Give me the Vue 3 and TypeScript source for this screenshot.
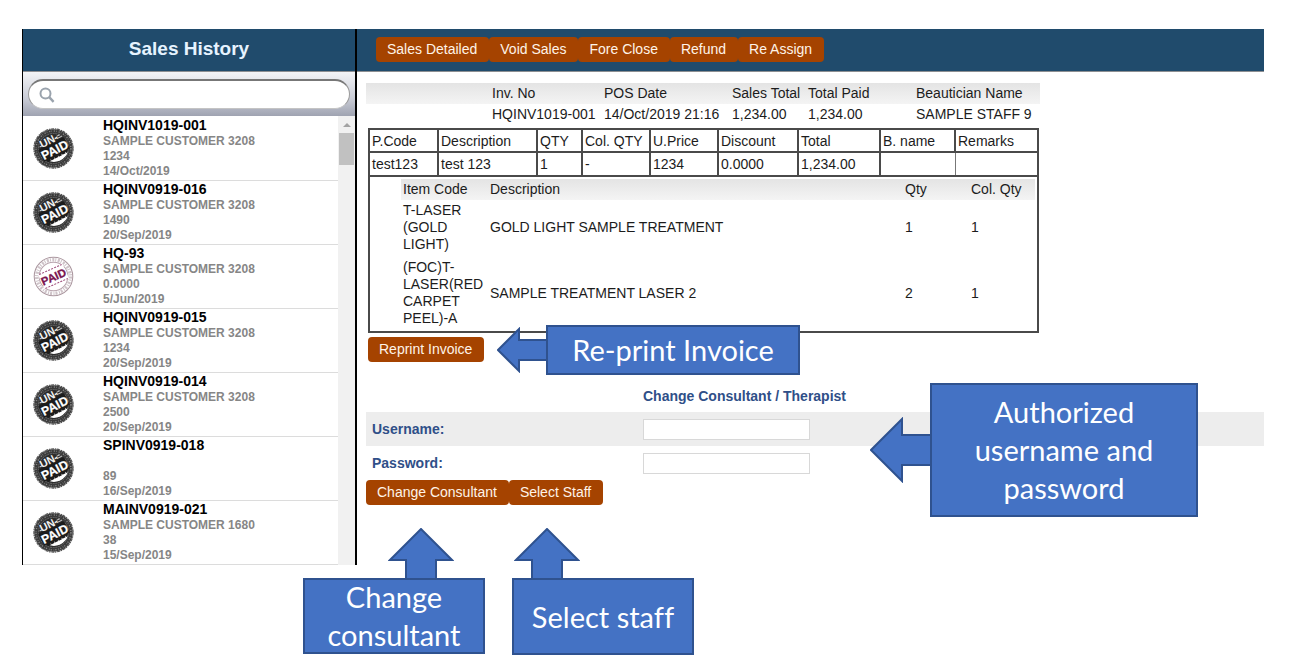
<script setup lang="ts">
interface Sale {
  invoice: string
  customer: string
  amount: string
  date: string
  paid: boolean
}

interface TreatmentItem {
  code: string
  description: string
  qty: number
  collected: number
}

const sales: Sale[] = [
  { invoice: 'HQINV1019-001', customer: 'SAMPLE CUSTOMER 3208', amount: '1234', date: '14/Oct/2019', paid: false },
  { invoice: 'HQINV0919-016', customer: 'SAMPLE CUSTOMER 3208', amount: '1490', date: '20/Sep/2019', paid: false },
  { invoice: 'HQ-93', customer: 'SAMPLE CUSTOMER 3208', amount: '0.0000', date: '5/Jun/2019', paid: true },
  { invoice: 'HQINV0919-015', customer: 'SAMPLE CUSTOMER 3208', amount: '1234', date: '20/Sep/2019', paid: false },
  { invoice: 'HQINV0919-014', customer: 'SAMPLE CUSTOMER 3208', amount: '2500', date: '20/Sep/2019', paid: false },
  { invoice: 'SPINV0919-018', customer: '', amount: '89', date: '16/Sep/2019', paid: false },
  { invoice: 'MAINV0919-021', customer: 'SAMPLE CUSTOMER 1680', amount: '38', date: '15/Sep/2019', paid: false },
]

const actions: string[] = ['Sales Detailed', 'Void Sales', 'Fore Close', 'Refund', 'Re Assign']

const lineHeads: string[] = ['P.Code', 'Description', 'QTY', 'Col. QTY', 'U.Price', 'Discount', 'Total', 'B. name', 'Remarks']
const lineCells: string[] = ['test123', 'test 123', '1', '-', '1234', '0.0000', '1,234.00', '', '']

const items: TreatmentItem[] = [
  { code: 'T-LASER (GOLD LIGHT)', description: 'GOLD LIGHT SAMPLE TREATMENT', qty: 1, collected: 1 },
  { code: '(FOC)T-LASER(RED CARPET PEEL)-A', description: 'SAMPLE TREATMENT LASER 2', qty: 2, collected: 1 },
]
</script>

<template>
  <div class="page">
    <div class="shell">
      <aside class="sidebar">
        <header class="bar side-bar"><h1>Sales History</h1></header>
        <div class="search">
          <label class="pill">
            <svg class="lens" viewBox="0 0 16 16" aria-hidden="true">
              <circle cx="6.5" cy="6.5" r="5" fill="none" stroke="#9aa3ad" stroke-width="2" />
              <path d="M10.2 10.2 L14.6 14.8" stroke="#9aa3ad" stroke-width="2.4" />
            </svg>
            <input type="search" aria-label="Search sales" />
          </label>
        </div>
        <div class="list-wrap">
          <ul class="list">
            <li v-for="sale in sales" :key="sale.invoice" class="sale">
              <svg v-if="sale.paid" class="stamp" viewBox="0 0 40 40" role="img" aria-label="Paid">
                <circle cx="20" cy="20" r="18.8" fill="#fff" stroke="#ab979f" stroke-width="1" />
                <circle cx="20" cy="20" r="16.4" fill="none" stroke="#cfc4c9" stroke-width="3.4" stroke-dasharray="2 1 1 1.4" />
                <circle cx="20" cy="20" r="14" fill="none" stroke="#b9a5ae" stroke-width="1" />
                <g transform="rotate(-24 20 20)">
                  <rect x="7" y="12" width="26" height="16" fill="#fff" />
                  <path d="M8 12.6H32M8 27.4H32" stroke="#9c4a78" stroke-width="1" stroke-dasharray="2 1.2" />
                  <text x="20" y="24.2" text-anchor="middle" font-size="11" fill="#7a1450" stroke="#7a1450" stroke-width=".3">PAID</text>
                </g>
              </svg>
              <svg v-else class="stamp" viewBox="0 0 40 40" role="img" aria-label="Unpaid">
                <circle cx="20" cy="20" r="18.8" fill="#3a3a3a" />
                <circle cx="20" cy="20" r="19.1" fill="none" stroke="#555" stroke-width="1.2" stroke-dasharray="3 .8 1.4 .6" />
                <circle cx="20" cy="20" r="17" fill="none" stroke="#858585" stroke-width="1.4" stroke-dasharray="1.2 1.1 .6 1.8" />
                <circle cx="20" cy="20" r="14.6" fill="#2b2b2b" stroke="#808080" stroke-width=".7" stroke-dasharray="2 .7" />
                <g transform="rotate(-27 20 20)">
                  <path d="M10 28.4H31.6Q28 33.4 20 33.4Q14 32.8 10 28.4Z" fill="#fff" />
                  <path d="M6 14.6H34V27.4H6Z" fill="#1c1c1c" />
                  <path d="M9 28.4H31" stroke="#1c1c1c" stroke-width="2.2" stroke-dasharray="3.4 .6" />
                  <path d="M8.6 12.6L12 12.6M28 10.8H31.4M27.4 13H32.6" stroke="#ccc" stroke-width="1" />
                  <text x="19.4" y="14.8" text-anchor="middle" font-size="10.5" fill="#f2f2f2">UN-</text>
                  <text x="20.4" y="26" text-anchor="middle" font-size="12" fill="#fff" stroke="#fff" stroke-width=".2">PAID</text>
                </g>
              </svg>
              <div class="sale-text">
                <strong>{{ sale.invoice }}</strong>
                <span>{{ sale.customer }}</span>
                <span>{{ sale.amount }}</span>
                <span>{{ sale.date }}</span>
              </div>
            </li>
          </ul>
          <div class="scroll" aria-hidden="true">
            <svg class="scroll-up" viewBox="0 0 8 4"><path d="M0 4L4 0L8 4Z" fill="#a3a3a3" /></svg>
            <div class="thumb"></div>
          </div>
        </div>
      </aside>

      <main class="main">
        <nav class="bar actions">
          <button v-for="action in actions" :key="action" type="button" class="btn">{{ action }}</button>
        </nav>
        <div class="content">
          <table class="summary">
            <colgroup>
              <col class="s-blank" /><col class="s-inv" /><col class="s-date" /><col class="s-total" /><col class="s-paid" /><col class="s-name" />
            </colgroup>
            <thead>
              <tr><th></th><th>Inv. No</th><th>POS Date</th><th>Sales Total</th><th>Total Paid</th><th>Beautician Name</th></tr>
            </thead>
            <tbody>
              <tr><td></td><td>HQINV1019-001</td><td>14/Oct/2019 21:16</td><td>1,234.00</td><td>1,234.00</td><td>SAMPLE STAFF 9</td></tr>
            </tbody>
          </table>

          <table class="lines">
            <colgroup>
              <col class="l-code" /><col class="l-desc" /><col class="l-qty" /><col class="l-price" /><col class="l-price" /><col class="l-disc" /><col class="l-total" /><col class="l-name" /><col class="l-remarks" />
            </colgroup>
            <thead>
              <tr><th v-for="head in lineHeads" :key="head">{{ head }}</th></tr>
            </thead>
            <tbody>
              <tr><td v-for="(cell, i) in lineCells" :key="i" :class="{ 'thin-right': i === 7, thin: i === 8 }">{{ cell }}</td></tr>
              <tr>
                <td colspan="9" class="nest">
                  <table class="items">
                    <colgroup><col class="i-code" /><col /><col class="i-qty" /><col class="i-qty" /></colgroup>
                    <thead>
                      <tr><th>Item Code</th><th>Description</th><th>Qty</th><th>Col. Qty</th></tr>
                    </thead>
                    <tbody>
                      <tr v-for="item in items" :key="item.code">
                        <td>{{ item.code }}</td><td>{{ item.description }}</td><td>{{ item.qty }}</td><td>{{ item.collected }}</td>
                      </tr>
                    </tbody>
                  </table>
                </td>
              </tr>
            </tbody>
          </table>
          <button type="button" class="btn reprint">Reprint Invoice</button>

          <form class="login" @submit.prevent>
            <h2>Change Consultant / Therapist</h2>
            <div class="field shaded">
              <label for="username">Username:</label>
              <input id="username" type="text" />
            </div>
            <div class="field">
              <label for="password">Password:</label>
              <input id="password" type="password" />
            </div>
            <div class="login-actions">
              <button type="button" class="btn">Change Consultant</button>
              <button type="button" class="btn">Select Staff</button>
            </div>
          </form>
        </div>
      </main>
    </div>

    <svg class="arrow arrow-reprint" viewBox="0 0 50 46"><path d="M50 13H22V2L1 23L22 44V33H50" /></svg>
    <div class="callout note-reprint">Re-print Invoice</div>
    <svg class="arrow arrow-login" viewBox="0 0 62 66"><path d="M62 18H32V2L1 33L32 64V48H62" /></svg>
    <div class="callout note-login">Authorized username and password</div>
    <svg class="arrow arrow-change" viewBox="0 0 66 52"><path d="M18 52V32H2L33 1L64 32H48V52" /></svg>
    <div class="callout note-change">Change consultant</div>
    <svg class="arrow arrow-staff" viewBox="0 0 66 52"><path d="M18 52V32H2L33 1L64 32H48V52" /></svg>
    <div class="callout note-staff">Select staff</div>
  </div>
</template>

<style>
body {
  background: #fff;
}
</style>

<style scoped>
.page {
  position: relative;
  box-sizing: border-box;
  min-height: 100vh;
  padding: 29px 30px 0 22px;
  font-family: "Liberation Sans", Arial, sans-serif;
  font-size: 14px;
  color: #1c1c1c;
}
.shell {
  display: grid;
  grid-template-columns: 335px 1fr;
}
.sidebar {
  box-sizing: border-box;
  border-left: 1px solid #000;
  border-right: 2px solid #000;
}
.bar {
  box-sizing: border-box;
  display: flex;
  align-items: center;
  height: 43px;
  padding-bottom: 2px;
  background: #204b6c;
  border-bottom: 1px solid #8d8f92;
}
.side-bar {
  justify-content: center;
}
h1 {
  margin: 0;
  font-size: 19px;
  line-height: 24px;
  color: #e6f3ff;
}
.search {
  padding: 7px 5px;
  background: linear-gradient(#f3f4f7, #c9ccd6 60%, #9fa3b1);
}
.pill {
  box-sizing: border-box;
  display: flex;
  align-items: center;
  gap: 8px;
  height: 30px;
  padding: 0 14px 0 10px;
  background: #fff;
  border: 1px solid #999;
  border-top: 2px solid #777;
  border-bottom-color: #c4c4c4;
  border-radius: 15px;
}
.lens {
  width: 16px;
  height: 16px;
}
.pill input {
  flex: 1;
  min-width: 0;
  border: 0;
  outline: 0;
  background: transparent;
  font: inherit;
}
.list-wrap {
  display: flex;
}
.list {
  flex: 1;
  margin: 0;
  padding: 1px 0 0;
  list-style: none;
}
.sale {
  box-sizing: border-box;
  display: flex;
  align-items: center;
  gap: 29px;
  height: 64px;
  padding-left: 10px;
  border-bottom: 1px solid #dcdcdc;
}
.stamp {
  width: 41px;
  height: 41px;
  font-family: "Liberation Sans", Arial, sans-serif;
  font-weight: bold;
}
.sale-text {
  display: flex;
  flex-direction: column;
  padding-bottom: 2px;
  font-size: 12px;
  font-weight: bold;
  color: #868686;
}
.sale-text strong {
  font-size: 14px;
  line-height: 17px;
  color: #000;
}
.sale-text span {
  height: 15px;
  line-height: 15px;
}
.scroll {
  box-sizing: border-box;
  width: 17px;
  padding: 7px 1px 0;
  background: #f1f1f1;
}
.scroll-up {
  display: block;
  width: 8px;
  height: 4px;
  margin: 0 auto 6px;
}
.thumb {
  height: 32px;
  background: #c1c1c1;
}
.actions {
  padding-left: 19px;
}
.btn {
  height: 25px;
  padding: 0 12px 0 11px;
  border: 0;
  border-radius: 4px;
  background: #a54300;
  color: #fff3e8;
  font: 14px/25px "Liberation Sans", Arial, sans-serif;
  white-space: nowrap;
}
.content {
  padding: 11px 0 0 9px;
}
table {
  table-layout: fixed;
  border-collapse: collapse;
}
th,
td {
  padding: 0;
  font-weight: normal;
  text-align: left;
}
.summary {
  width: 674px;
  white-space: nowrap;
}
.summary th,
.summary td {
  padding-bottom: 2px;
}
.summary thead tr,
.items thead tr {
  height: 21px;
  background: linear-gradient(#e4e4e4, #f4f4f4);
}
.summary tbody tr {
  height: 22px;
}
.s-blank { width: 126px; }
.s-inv { width: 112px; }
.s-date { width: 128px; }
.s-total { width: 76px; }
.s-paid { width: 108px; }
.s-name { width: 124px; }
.lines {
  width: 669px;
  margin: 2px 0 0 2px;
}
.lines > thead > tr {
  height: 23px;
}
.lines > tbody > tr:first-child {
  height: 24px;
}
.lines > thead > tr > th,
.lines > tbody > tr > td {
  padding-left: 2px;
  border: 2px solid #4a4a4a;
  white-space: nowrap;
}
.lines > tbody > tr > td.thin-right {
  border-right: 1px solid #777;
}
.lines > tbody > tr > td.thin {
  border-left: 1px solid #777;
}
.l-code { width: 69px; }
.l-desc { width: 99px; }
.l-qty { width: 45px; }
.l-price { width: 68px; }
.l-disc { width: 80px; }
.l-total { width: 82px; }
.l-name { width: 75px; }
.l-remarks { width: 83px; }
.lines > tbody > tr > td.nest {
  padding: 2px 2px 2px 31px;
  white-space: normal;
}
.items {
  width: 100%;
}
.items th,
.items td {
  padding: 2px;
  line-height: 17px;
}
.items tbody tr:first-child td {
  padding-bottom: 4px;
}
.i-code { width: 87px; }
.i-qty { width: 66px; }
.reprint {
  display: block;
  margin: 4px 0 0 2px;
}
.login {
  margin-top: 24px;
  color: #2f4f88;
}
h2 {
  margin: 0 0 0 277px;
  padding-bottom: 6px;
  font-size: 14px;
  line-height: 20px;
}
.field {
  display: grid;
  grid-template-columns: 271px 167px;
  align-items: center;
  height: 34px;
  padding-left: 6px;
}
.field label {
  padding-bottom: 1px;
  font-weight: bold;
}
.field input {
  box-sizing: border-box;
  width: 100%;
  height: 21px;
  padding: 0 4px;
  border: 1px solid #d8d8d8;
  background: #fff;
  font: inherit;
}
.shaded {
  background: #ededed;
}
.login-actions {
  display: flex;
}
.callout {
  position: absolute;
  box-sizing: border-box;
  display: flex;
  align-items: center;
  justify-content: center;
  padding: 0 12px;
  border: 2px solid #2f528f;
  background: #4472c4;
  color: #fff;
  font: 29px/38px Lato, Carlito, Calibri, sans-serif;
  font-variant-ligatures: none;
  text-align: center;
}
.arrow {
  position: absolute;
  fill: #4472c4;
  stroke: #2f528f;
  stroke-width: 2;
}
.note-reprint { left: 546px; top: 325px; width: 254px; height: 50px; }
.note-login { left: 930px; top: 383px; width: 268px; height: 134px; }
.note-change { left: 303px; top: 578px; width: 182px; height: 76px; }
.note-staff { left: 512px; top: 578px; width: 182px; height: 77px; }
.arrow-reprint { left: 497px; top: 327px; width: 50px; height: 46px; }
.arrow-login { left: 870px; top: 417px; width: 62px; height: 66px; }
.arrow-change { left: 388px; top: 528px; width: 66px; height: 52px; }
.arrow-staff { left: 514px; top: 528px; width: 66px; height: 52px; }
</style>
